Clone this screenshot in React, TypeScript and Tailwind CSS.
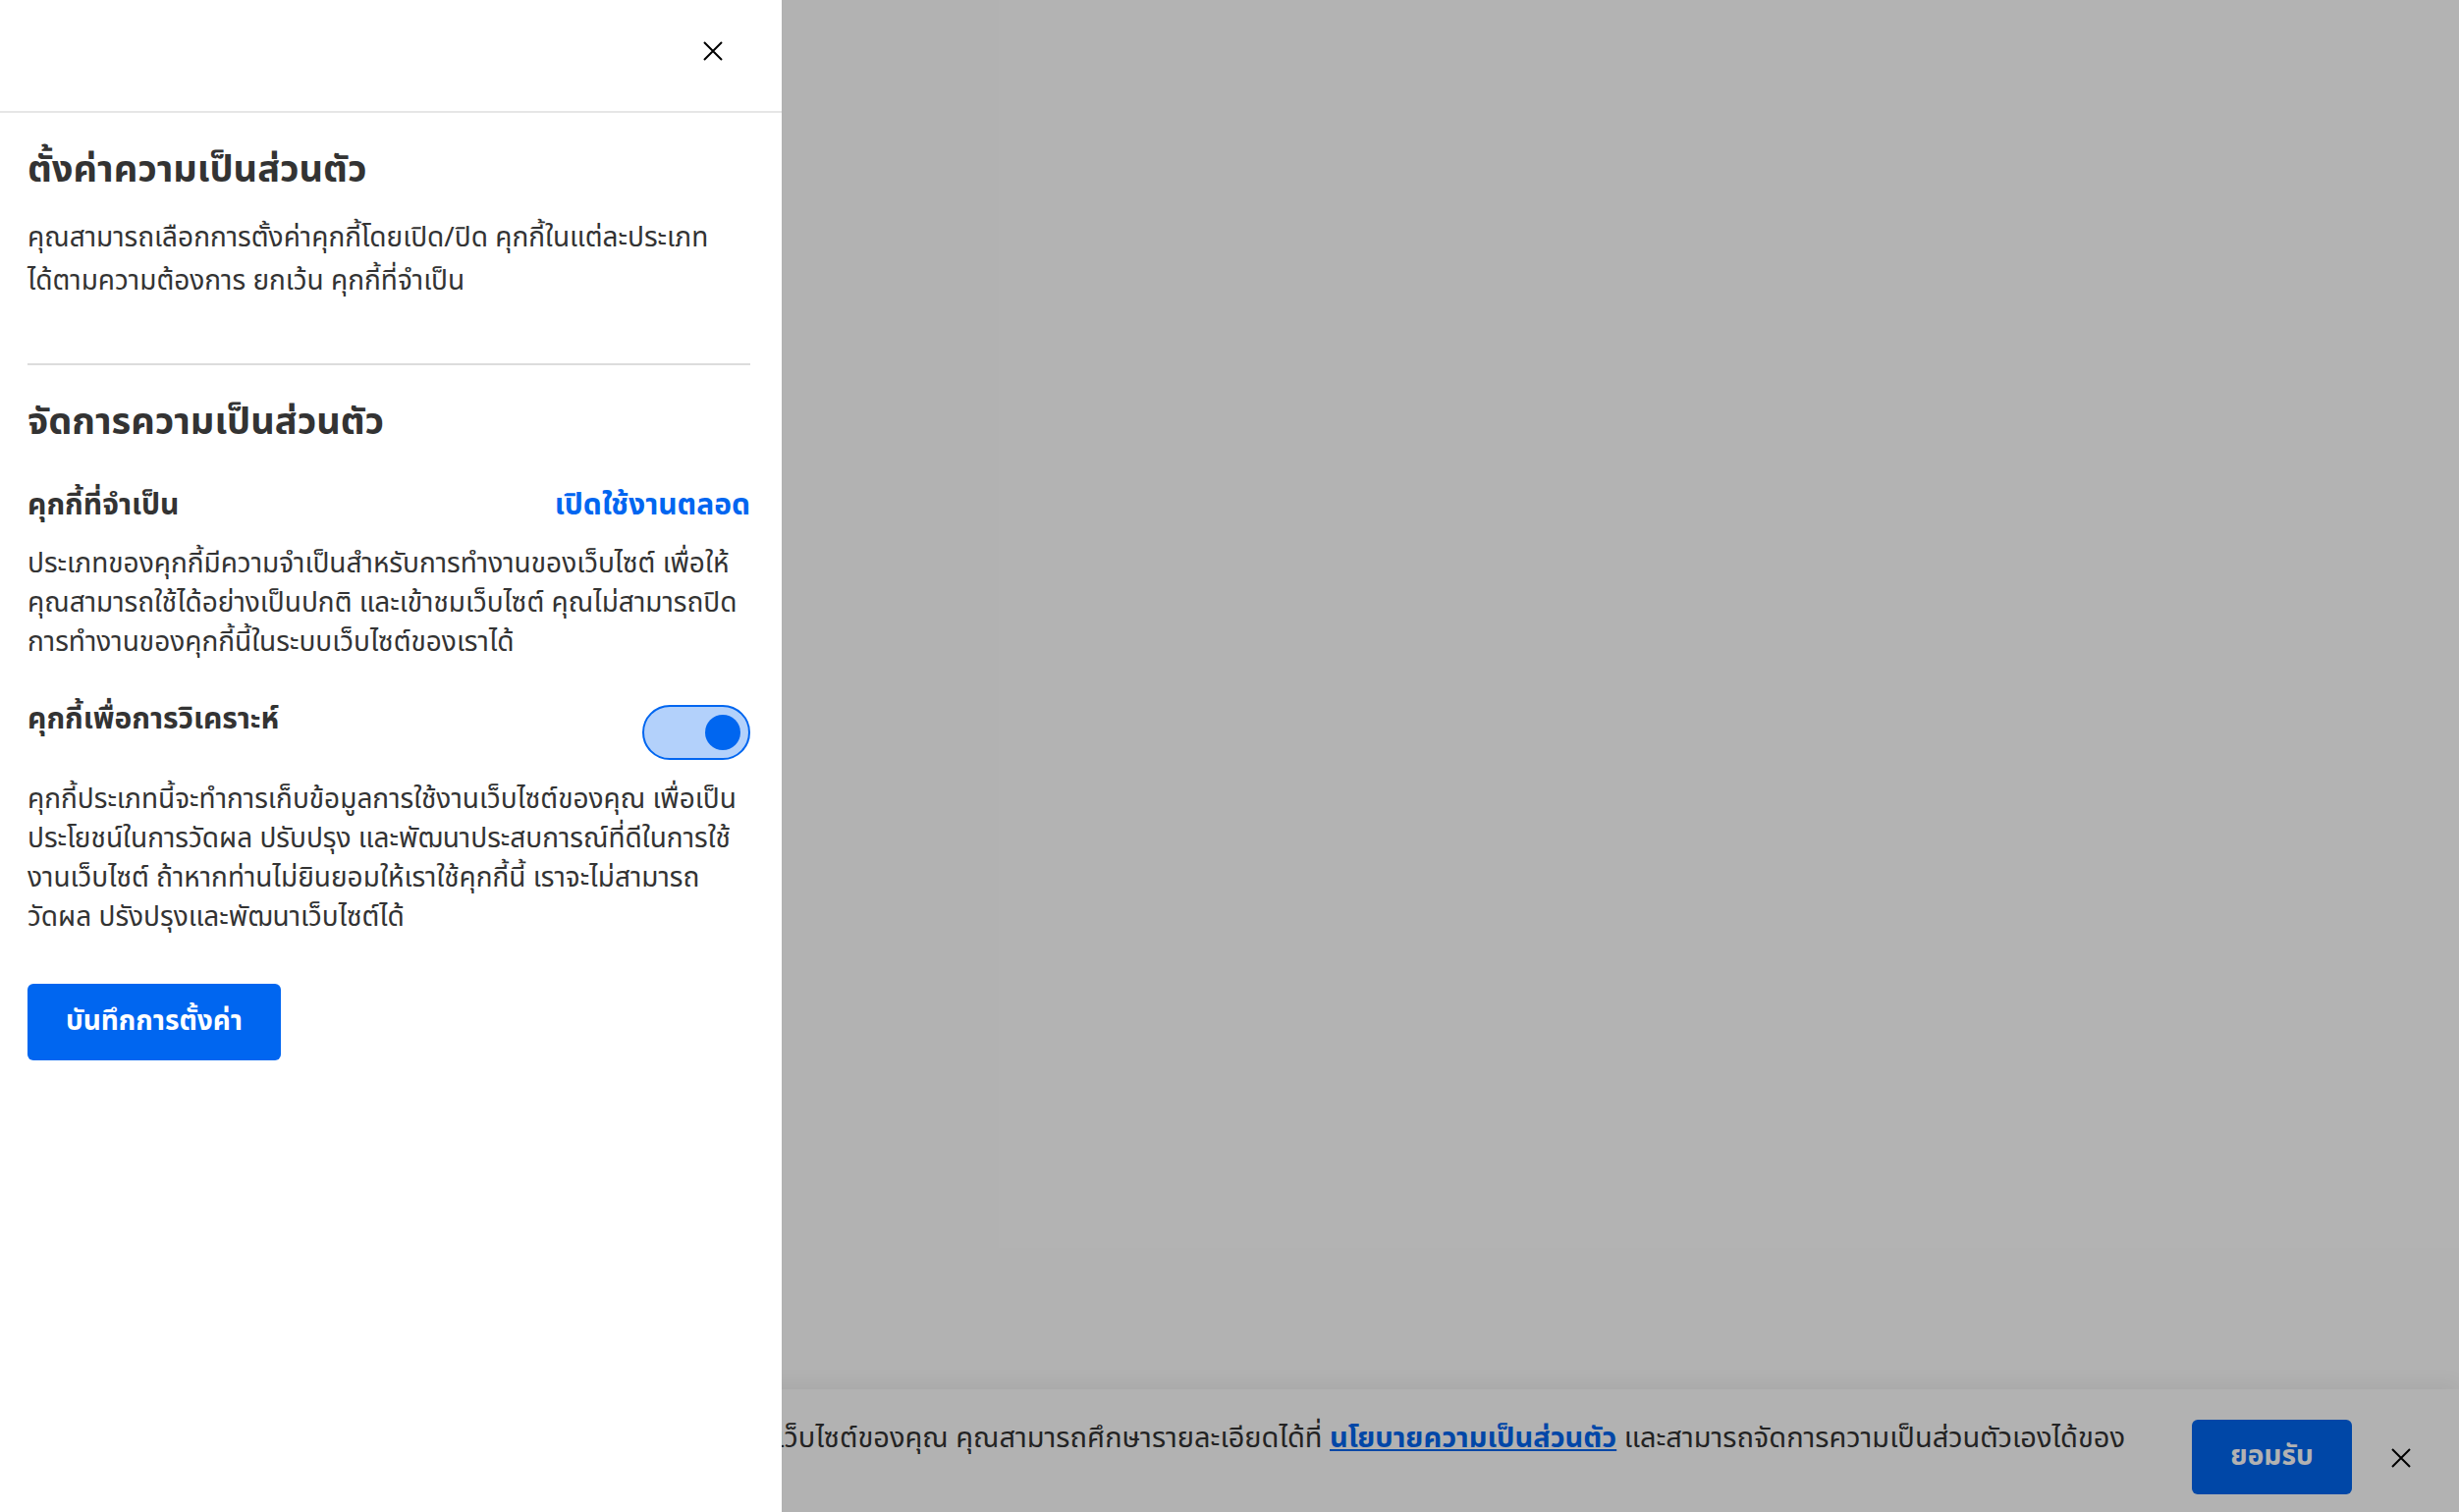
import React from "react";

const thai = { fontFamily: '"Noto Sans Thai", "Noto Sans", "Liberation Sans", sans-serif' };

function CloseIcon({ className }: { className?: string }) {
  return (
    <svg viewBox="0 0 20 20" className={className} fill="none" stroke="currentColor" strokeWidth={2}>
      <path d="M1 1L19 19M19 1L1 19" />
    </svg>
  );
}

function Toggle() {
  return (
    <div className="mt-[5px] flex h-[56px] w-[110px] shrink-0 items-center justify-end rounded-full border-2 border-[#0066f0] bg-[#b3d1fb] pr-[8px]">
      <div className="h-[36px] w-[36px] rounded-full bg-[#0066f0]" />
    </div>
  );
}

function CookieBanner() {
  return (
    <div className="flex h-[125px] items-start bg-white pl-[48px] pt-[30px] pr-[49px] shadow-[0_-6px_18px_rgba(0,0,0,0.06)]">
      <p className="min-w-0 flex-1 whitespace-nowrap text-right text-[29px] leading-[40px] text-[#333]">
        ประสบการณ์ที่ดีในการใช้งานเว็บไซต์ของคุณ คุณสามารถศึกษารายละเอียดได้ที่{" "}
        <a className="font-bold text-[#0066f0] underline">นโยบายความเป็นส่วนตัว</a> และสามารถจัดการความเป็นส่วนตัวเองได้ของ
      </p>
      <button className="ml-[68px] mt-[1px] h-[76px] w-[163px] shrink-0 rounded-[6px] bg-[#0066f0] text-[28px] font-bold text-white">
        ยอมรับ
      </button>
      <button className="ml-[40px] mt-[30px] shrink-0 text-black">
        <CloseIcon className="h-[20px] w-[20px]" />
      </button>
    </div>
  );
}

function PrivacyPanel() {
  return (
    <aside className="flex h-full w-[796px] flex-col bg-white">
      <div className="flex h-[115px] shrink-0 items-start justify-end border-b-2 border-[#e6e6e6] pt-[42px] pr-[60px]">
        <button className="text-black">
          <CloseIcon className="h-[20px] w-[20px]" />
        </button>
      </div>
      <div className="pl-[28px] pr-[32px] pt-[34px] text-[#333]">
        <h2 className="text-[38px] font-bold leading-[50px]">ตั้งค่าความเป็นส่วนตัว</h2>
        <p className="mt-[22px] text-[28px] leading-[44px]">
          คุณสามารถเลือกการตั้งค่าคุกกี้โดยเปิด/ปิด คุกกี้ในแต่ละประเภท
          <br />
          ได้ตามความต้องการ ยกเว้น คุกกี้ที่จำเป็น
        </p>
        <div className="mt-[61px] border-t-2 border-[#dcdcdc]" />
        <h2 className="mt-[34px] text-[38px] font-bold leading-[50px]">จัดการความเป็นส่วนตัว</h2>
        <div className="mt-[39px] flex items-center justify-between">
          <h3 className="text-[30px] font-bold leading-[40px]">คุกกี้ที่จำเป็น</h3>
          <span className="text-[30px] font-bold leading-[40px] text-[#0066f0]">เปิดใช้งานตลอด</span>
        </div>
        <p className="mt-[20px] text-[28px] leading-[40px]">
          ประเภทของคุกกี้มีความจำเป็นสำหรับการทำงานของเว็บไซต์ เพื่อให้
          <br />
          คุณสามารถใช้ได้อย่างเป็นปกติ และเข้าชมเว็บไซต์ คุณไม่สามารถปิด
          <br />
          การทำงานของคุกกี้นี้ในระบบเว็บไซต์ของเราได้
        </p>
        <div className="mt-[38px] flex items-start justify-between">
          <h3 className="text-[30px] font-bold leading-[40px]">คุกกี้เพื่อการวิเคราะห์</h3>
          <Toggle />
        </div>
        <p className="mt-[21px] text-[28px] leading-[40px]">
          คุกกี้ประเภทนี้จะทำการเก็บข้อมูลการใช้งานเว็บไซต์ของคุณ เพื่อเป็น
          <br />
          ประโยชน์ในการวัดผล ปรับปรุง และพัฒนาประสบการณ์ที่ดีในการใช้
          <br />
          งานเว็บไซต์ ถ้าหากท่านไม่ยินยอมให้เราใช้คุกกี้นี้ เราจะไม่สามารถ
          <br />
          วัดผล ปรังปรุงและพัฒนาเว็บไซต์ได้
        </p>
        <button className="mt-[47px] h-[78px] w-[258px] rounded-[6px] bg-[#0066f0] text-[28px] font-bold text-white">
          บันทึกการตั้งค่า
        </button>
      </div>
    </aside>
  );
}

export default function App() {
  return (
    <div className="relative h-[1540px] w-full overflow-hidden bg-white" style={thai}>
      <div className="flex h-full flex-col">
        <div className="flex-1" />
        <CookieBanner />
      </div>
      <div className="absolute inset-0 bg-black/30" />
      <div className="absolute inset-y-0 left-0">
        <PrivacyPanel />
      </div>
    </div>
  );
}
